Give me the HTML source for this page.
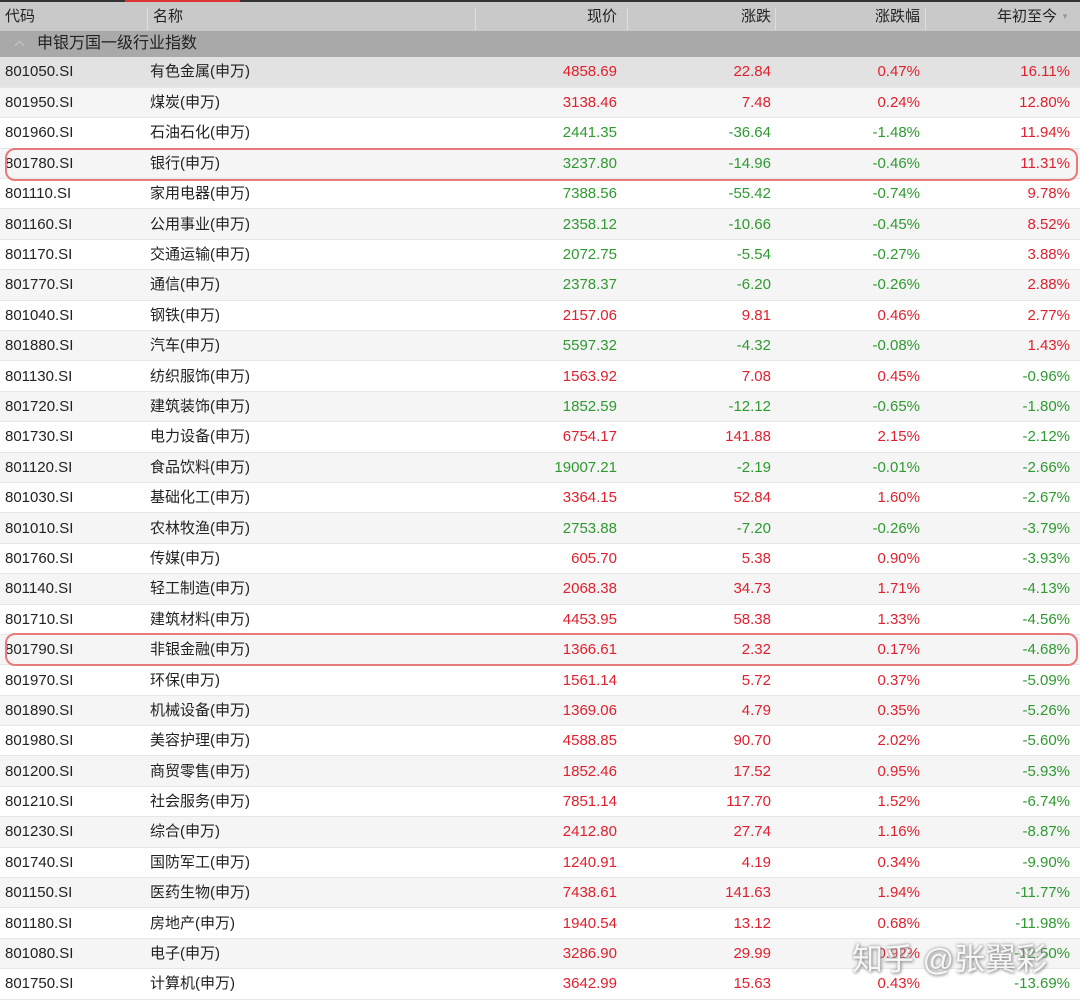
<!DOCTYPE html>
<html><head><meta charset="utf-8"><style>
*{margin:0;padding:0;box-sizing:border-box}
body{width:1080px;height:1002px;overflow:hidden;background:#fff;font-family:"Liberation Sans","Noto Sans CJK SC",sans-serif;font-size:15px;color:#222;position:relative}
.top{position:absolute;left:0;top:0;width:1080px;height:2px;background:#333}
.topr{position:absolute;left:125px;top:0;width:115px;height:2px;background:#d33}
.hd{position:absolute;left:0;top:2px;width:1080px;height:29px;background:#c9c9c9}
.hd span{position:absolute;top:0;line-height:29px}
.sep{position:absolute;top:6px;width:1px;height:22px;background:#ddd}
.grp{position:absolute;left:0;top:31px;width:1080px;height:26px;background:#a9a9a9}
.grp span{position:absolute;left:37px;top:0;line-height:26px;font-size:16px}
.grp i{position:absolute;left:16px;top:11px;width:7px;height:7px;border-left:1px solid #c8c8c8;border-top:1px solid #c8c8c8;transform:rotate(45deg)}
table{position:absolute;left:0;top:57px;width:1080px;border-collapse:collapse}
td{height:30.4px;line-height:29px;padding:0;white-space:nowrap;border-bottom:1px solid #e6e6e6;vertical-align:middle}
tr:nth-child(even) td{background:#f5f5f5}
tr:first-child td{background:#e2e2e2}
td:nth-child(1){width:150px;padding-left:5px}
td:nth-child(2){width:320px}
td:nth-child(3){width:147px;text-align:right}
td:nth-child(4){width:154px;text-align:right}
td:nth-child(5){width:149px;text-align:right}
td:nth-child(6){text-align:right;padding-right:10px}
.r{color:#e0202e}.g{color:#2e9a30}
.box{position:absolute;left:5px;width:1073px;height:33px;border:2.5px solid #e77a7a;border-radius:10px}
.wm{position:absolute;left:852px;top:942px;font-size:31px;line-height:36px;color:rgba(255,255,255,0.9);text-shadow:0 0 3px #999,1px 1px 3px #888}
</style></head><body>
<div class="top"></div><div class="topr"></div>
<div class="hd">
<span style="left:5px">代码</span><span style="left:153px">名称</span>
<span style="right:463px">现价</span><span style="right:309px">涨跌</span><span style="right:160px">涨跌幅</span><span style="right:23px">年初至今</span><span style="right:11px;font-size:8px;color:#999">▼</span>
<div class="sep" style="left:147px"></div><div class="sep" style="left:475px"></div><div class="sep" style="left:627px"></div><div class="sep" style="left:775px"></div><div class="sep" style="left:925px"></div>
</div>
<div class="grp"><i></i><span>申银万国一级行业指数</span></div>
<table>
<tr><td>801050.SI</td><td>有色金属(申万)</td><td class="r">4858.69</td><td class="r">22.84</td><td class="r">0.47%</td><td class="r">16.11%</td></tr>
<tr><td>801950.SI</td><td>煤炭(申万)</td><td class="r">3138.46</td><td class="r">7.48</td><td class="r">0.24%</td><td class="r">12.80%</td></tr>
<tr><td>801960.SI</td><td>石油石化(申万)</td><td class="g">2441.35</td><td class="g">-36.64</td><td class="g">-1.48%</td><td class="r">11.94%</td></tr>
<tr><td>801780.SI</td><td>银行(申万)</td><td class="g">3237.80</td><td class="g">-14.96</td><td class="g">-0.46%</td><td class="r">11.31%</td></tr>
<tr><td>801110.SI</td><td>家用电器(申万)</td><td class="g">7388.56</td><td class="g">-55.42</td><td class="g">-0.74%</td><td class="r">9.78%</td></tr>
<tr><td>801160.SI</td><td>公用事业(申万)</td><td class="g">2358.12</td><td class="g">-10.66</td><td class="g">-0.45%</td><td class="r">8.52%</td></tr>
<tr><td>801170.SI</td><td>交通运输(申万)</td><td class="g">2072.75</td><td class="g">-5.54</td><td class="g">-0.27%</td><td class="r">3.88%</td></tr>
<tr><td>801770.SI</td><td>通信(申万)</td><td class="g">2378.37</td><td class="g">-6.20</td><td class="g">-0.26%</td><td class="r">2.88%</td></tr>
<tr><td>801040.SI</td><td>钢铁(申万)</td><td class="r">2157.06</td><td class="r">9.81</td><td class="r">0.46%</td><td class="r">2.77%</td></tr>
<tr><td>801880.SI</td><td>汽车(申万)</td><td class="g">5597.32</td><td class="g">-4.32</td><td class="g">-0.08%</td><td class="r">1.43%</td></tr>
<tr><td>801130.SI</td><td>纺织服饰(申万)</td><td class="r">1563.92</td><td class="r">7.08</td><td class="r">0.45%</td><td class="g">-0.96%</td></tr>
<tr><td>801720.SI</td><td>建筑装饰(申万)</td><td class="g">1852.59</td><td class="g">-12.12</td><td class="g">-0.65%</td><td class="g">-1.80%</td></tr>
<tr><td>801730.SI</td><td>电力设备(申万)</td><td class="r">6754.17</td><td class="r">141.88</td><td class="r">2.15%</td><td class="g">-2.12%</td></tr>
<tr><td>801120.SI</td><td>食品饮料(申万)</td><td class="g">19007.21</td><td class="g">-2.19</td><td class="g">-0.01%</td><td class="g">-2.66%</td></tr>
<tr><td>801030.SI</td><td>基础化工(申万)</td><td class="r">3364.15</td><td class="r">52.84</td><td class="r">1.60%</td><td class="g">-2.67%</td></tr>
<tr><td>801010.SI</td><td>农林牧渔(申万)</td><td class="g">2753.88</td><td class="g">-7.20</td><td class="g">-0.26%</td><td class="g">-3.79%</td></tr>
<tr><td>801760.SI</td><td>传媒(申万)</td><td class="r">605.70</td><td class="r">5.38</td><td class="r">0.90%</td><td class="g">-3.93%</td></tr>
<tr><td>801140.SI</td><td>轻工制造(申万)</td><td class="r">2068.38</td><td class="r">34.73</td><td class="r">1.71%</td><td class="g">-4.13%</td></tr>
<tr><td>801710.SI</td><td>建筑材料(申万)</td><td class="r">4453.95</td><td class="r">58.38</td><td class="r">1.33%</td><td class="g">-4.56%</td></tr>
<tr><td>801790.SI</td><td>非银金融(申万)</td><td class="r">1366.61</td><td class="r">2.32</td><td class="r">0.17%</td><td class="g">-4.68%</td></tr>
<tr><td>801970.SI</td><td>环保(申万)</td><td class="r">1561.14</td><td class="r">5.72</td><td class="r">0.37%</td><td class="g">-5.09%</td></tr>
<tr><td>801890.SI</td><td>机械设备(申万)</td><td class="r">1369.06</td><td class="r">4.79</td><td class="r">0.35%</td><td class="g">-5.26%</td></tr>
<tr><td>801980.SI</td><td>美容护理(申万)</td><td class="r">4588.85</td><td class="r">90.70</td><td class="r">2.02%</td><td class="g">-5.60%</td></tr>
<tr><td>801200.SI</td><td>商贸零售(申万)</td><td class="r">1852.46</td><td class="r">17.52</td><td class="r">0.95%</td><td class="g">-5.93%</td></tr>
<tr><td>801210.SI</td><td>社会服务(申万)</td><td class="r">7851.14</td><td class="r">117.70</td><td class="r">1.52%</td><td class="g">-6.74%</td></tr>
<tr><td>801230.SI</td><td>综合(申万)</td><td class="r">2412.80</td><td class="r">27.74</td><td class="r">1.16%</td><td class="g">-8.87%</td></tr>
<tr><td>801740.SI</td><td>国防军工(申万)</td><td class="r">1240.91</td><td class="r">4.19</td><td class="r">0.34%</td><td class="g">-9.90%</td></tr>
<tr><td>801150.SI</td><td>医药生物(申万)</td><td class="r">7438.61</td><td class="r">141.63</td><td class="r">1.94%</td><td class="g">-11.77%</td></tr>
<tr><td>801180.SI</td><td>房地产(申万)</td><td class="r">1940.54</td><td class="r">13.12</td><td class="r">0.68%</td><td class="g">-11.98%</td></tr>
<tr><td>801080.SI</td><td>电子(申万)</td><td class="r">3286.90</td><td class="r">29.99</td><td class="r">0.92%</td><td class="g">-12.50%</td></tr>
<tr><td>801750.SI</td><td>计算机(申万)</td><td class="r">3642.99</td><td class="r">15.63</td><td class="r">0.43%</td><td class="g">-13.69%</td></tr>
</table>
<div class="box" style="top:148px"></div>
<div class="box" style="top:633px"></div>
<div class="wm">知乎 @张翼彩</div>
</body></html>
